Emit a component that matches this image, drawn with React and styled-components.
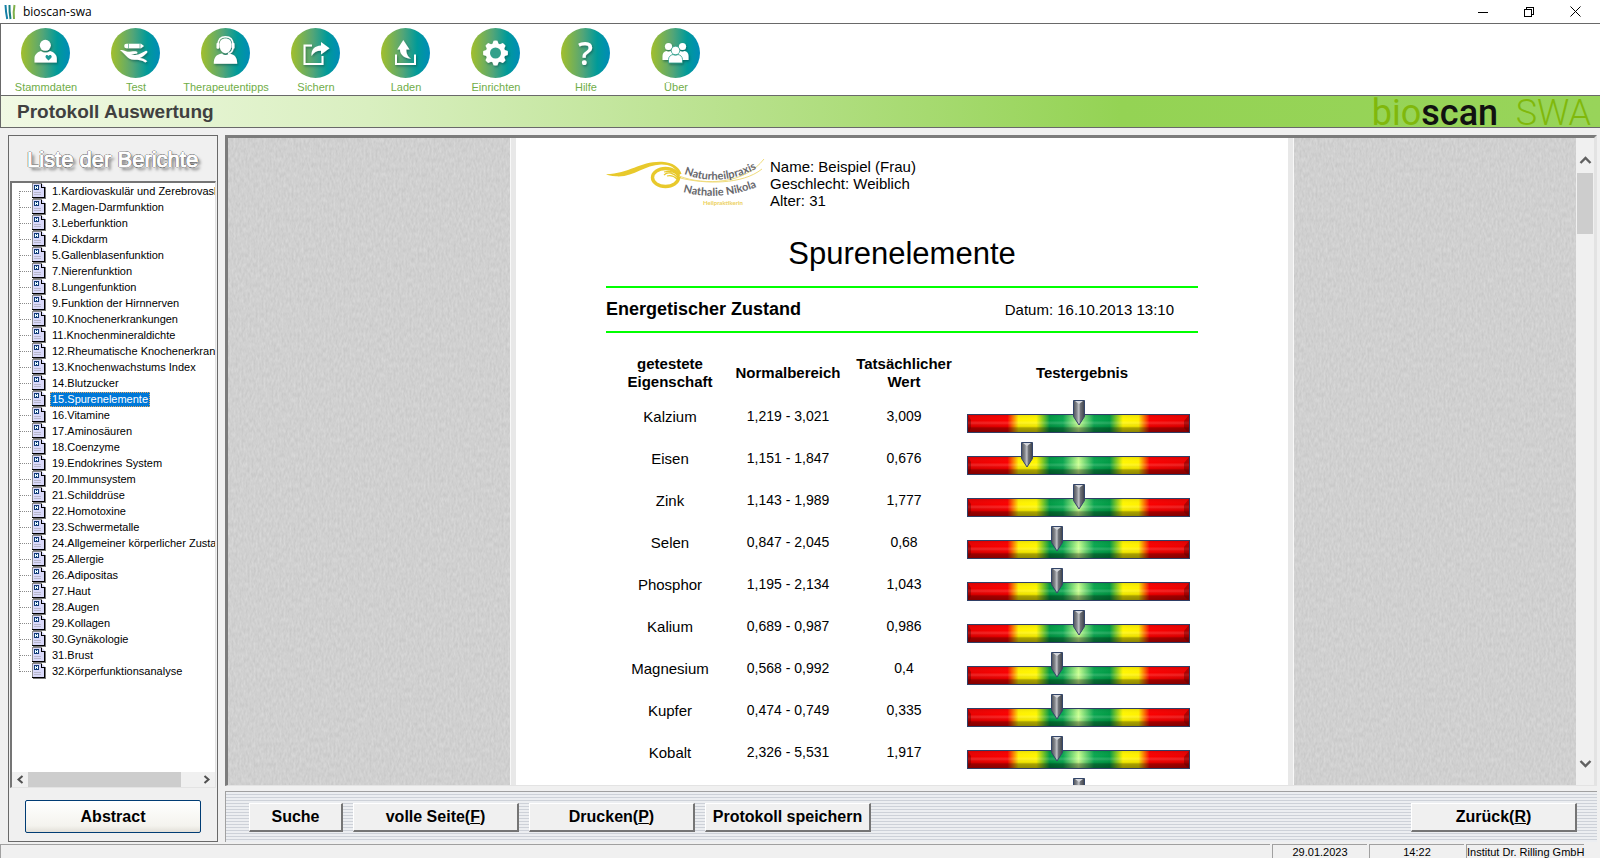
import React from "react";
import styled, { createGlobalStyle, css } from "styled-components";

const GlobalStyle = createGlobalStyle`
  * { box-sizing: border-box; }
  html, body, #root { height: 100%; margin: 0; }
  body {
    background: #f0f0f0;
    color: #000;
    font-family: "Liberation Sans", Arial, sans-serif;
    font-size: 11px;
    overflow: hidden;
  }
  button { font-family: inherit; color: inherit; margin: 0; padding: 0; }
`;

const Window = styled.div`
  display: flex;
  flex-direction: column;
  height: 100vh;
`;

/* ---------- title bar ---------- */

const TitleBar = styled.header`
  display: flex;
  align-items: center;
  height: 23px;
  padding: 0 2px 0 4px;
  background: #fff;
`;

const AppName = styled.span`
  flex: 1;
  padding-left: 7px;
  font: 12px/16px "Open Sans", "Noto Sans", sans-serif;
`;

const WindowButtons = styled.div`
  display: flex;
`;

const WindowButton = styled.button`
  display: grid;
  place-items: center;
  width: 46px;
  height: 20px;
  border: 0;
  background: none;
`;

/* ---------- tool bar ---------- */

const ToolBar = styled.nav`
  display: flex;
  height: 73px;
  border: 1px solid #696969;
  border-right: 0;
  background: #fff;
`;

const ToolButton = styled.button`
  display: flex;
  flex-direction: column;
  align-items: center;
  gap: 3px;
  width: 90px;
  padding-top: 4px;
  border: 0;
  background: none;
  color: #70ad47;
  font-size: 11px;
  line-height: 13px;
  white-space: nowrap;
`;

/* ---------- banner ---------- */

const Banner = styled.div`
  display: flex;
  align-items: center;
  justify-content: space-between;
  height: 32px;
  padding: 0 9px 0 16px;
  border-left: 1px solid #696969;
  border-bottom: 1px solid #696969;
  background: linear-gradient(90deg, #f1f9e4 0%, #d9efc0 23%, #b8e18c 46%, #94d354 70%, #98d45a 100%);
`;

const BannerTitle = styled.h1`
  margin: 0;
  color: #404040;
  font-size: 19px;
  line-height: 28px;
`;

const Brand = styled.div`
  padding-top: 4px;
  color: #80b80c;
  font: 300 36px/31px Roboto, sans-serif;
  white-space: pre;
  b { color: #111; font-weight: 500; }
`;

const BrandPrefix = styled.span`
  font-weight: 400;
`;

/* ---------- main area ---------- */

const Main = styled.main`
  display: flex;
  flex: 1;
  gap: 7px;
  min-height: 0;
  padding: 7px 3px 2px 8px;
`;

const Sidebar = styled.aside`
  display: flex;
  flex-direction: column;
  width: 210px;
  border: 1px solid #696969;
`;

const SidebarTitle = styled.h2`
  margin: 0;
  padding: 11px 0 8px 18px;
  color: #fff;
  font-size: 22px;
  font-weight: 400;
  line-height: 26px;
  white-space: nowrap;
  -webkit-text-stroke: 1px #fff;
  text-shadow:
    1px 0 0 #555, -1px 0 0 #555, 0 1px 0 #555, 0 -1px 0 #555,
    3px 3px 3px #777;
`;

const TreeBox = styled.div`
  display: flex;
  flex: 1;
  flex-direction: column;
  min-height: 0;
  margin: 0 1px;
  border: 1px solid #e3e3e3;
  border-top: 2px solid #757575;
  border-left: 2px solid #757575;
  background: #fff;
`;

const Tree = styled.ul`
  flex: 1;
  margin: 0;
  padding: 0;
  list-style: none;
  overflow: hidden;
`;

const TreeRow = styled.li`
  display: flex;
  align-items: center;
  height: 16px;
  padding-left: 7px;
  svg { flex: none; }
`;

const TreeLabel = styled.button`
  height: 15px;
  margin-left: 4px;
  padding: 0 1px;
  border: 1px dotted transparent;
  background: none;
  font-size: 11px;
  line-height: 13px;
  white-space: nowrap;
  ${(p) => p.$selected && css`
    border-color: #e8a860;
    background: #0078d7;
    color: #fff;
  `}
`;

const HScroll = styled.div`
  display: grid;
  grid-template-columns: 16px 1fr 17px;
  height: 15px;
  background: #f0f0f0;
`;

const VScroll = styled.div`
  display: flex;
  flex-direction: column;
  align-items: stretch;
  justify-content: space-between;
  width: 18px;
  padding: 15px 1px 14px;
  background: #f0f0f0;
`;

const ScrollArrow = styled.button`
  display: grid;
  place-items: center;
  min-height: 15px;
  border: 0;
  background: none;
`;

const HThumb = styled.div`
  width: 90%;
  background: #cdcdcd;
`;

const VTrack = styled.div`
  flex: 1;
  padding-top: 5px;
`;

const VThumb = styled.div`
  height: 61px;
  background: #cdcdcd;
`;

const SidebarFooter = styled.div`
  padding: 12px 16px 8px;
`;

const AbstractButton = styled.button`
  width: 100%;
  height: 33px;
  border: 1px solid #003c74;
  border-radius: 2px;
  background: linear-gradient(#fff, #f4f3ee 80%, #e2dfd8);
  font-size: 16px;
  font-weight: 700;
`;

const Content = styled.section`
  display: flex;
  flex: 1;
  flex-direction: column;
  gap: 5px;
  min-width: 0;
`;

const Viewer = styled.div`
  display: flex;
  flex: 1;
  min-height: 0;
  border: 1px solid #e3e3e3;
  border-right-width: 3px;
  border-top: 3px solid #7c7c7c;
  border-left: 3px solid #7c7c7c;
`;

const Desk = styled.div`
  position: relative;
  display: flex;
  flex: 1;
  justify-content: center;
  background: #cfcfcf;
  overflow: hidden;
`;

const Grain = styled.svg`
  position: absolute;
  inset: 0;
  width: 100%;
  height: 100%;
`;

const Paper = styled.article`
  position: relative;
  width: 782px;
  min-height: 1000px;
  padding: 20px 90px 0;
  border: solid #e8e8e8;
  border-width: 0 5px;
  outline: 1px solid #f8f8f8;
  background: #fff;
  font-size: 15px;
`;

const PatientHeader = styled.div`
  display: flex;
  gap: 4px;
`;

const PatientInfo = styled.div`
  font-size: 15px;
  line-height: 17px;
`;

const ReportTitle = styled.h2`
  margin: 27px 0 14px;
  font-size: 31px;
  font-weight: 400;
  line-height: 36px;
  text-align: center;
`;

const StateLine = styled.div`
  display: flex;
  align-items: center;
  justify-content: space-between;
  height: 47px;
  padding-right: 24px;
  border: solid #0f0;
  border-width: 2px 0;
  h3 { margin: 0; font-size: 18px; }
`;

const ResultTable = styled.table`
  width: 100%;
  margin-top: 18px;
  border-collapse: collapse;
  table-layout: fixed;
  text-align: center;
  th { height: 44px; padding: 0; line-height: 18px; }
  td { height: 42px; padding: 0; }
  svg { display: block; }
`;

const NumberCell = styled.td`
  font-size: 14px;
`;

const GaugeCell = styled.td`
  && { padding-left: 1px; }
`;

const Column = styled.col`
  width: ${(p) => p.$width};
`;

const ActionBar = styled.footer`
  display: flex;
  align-items: flex-start;
  gap: 10px;
  height: 51px;
  padding: 11px 20px 0 23px;
  border-top: 1px solid #a0a0a0;
  border-left: 1px solid #a0a0a0;
  background: repeating-linear-gradient(#eceef1 0 2px, #cdd1d8 2px 3px);
`;

const ActionButton = styled.button`
  width: ${(p) => (p.$narrow ? "94px" : "166px")};
  height: 29px;
  border: solid;
  border-width: 1px 2px 2px 1px;
  border-color: #fff #757575 #757575 #fff;
  background: #f0f0f0;
  font-size: 16px;
  font-weight: 700;
  white-space: nowrap;
  ${(p) => p.$end && css`margin-left: auto;`}
`;

/* ---------- status bar ---------- */

const StatusBar = styled.footer`
  display: grid;
  grid-template-columns: 1fr 95px 95px 118px;
  gap: 2px;
  height: 14px;
  padding-right: 16px;
  line-height: 15px;
  text-align: center;
  white-space: nowrap;
`;

const StatusCell = styled.div`
  height: 14px;
  border: solid #a0a0a0;
  border-width: 1px 0 0 1px;
`;

/* ---------- drawings ---------- */

const gearPoints = Array.from({ length: 40 }, (_, i) => {
  const r = i % 5 < 3 ? 12.4 : 9.8;
  const a = (i * 9 - 9) * (Math.PI / 180);
  return `${(24.5 + r * Math.cos(a)).toFixed(2)},${(25 + r * Math.sin(a)).toFixed(2)}`;
}).join(" ");

const GLYPHS = {
  person: (
    <>
      <circle cx="24.3" cy="17.3" r="5.5" />
      <path d="M13.500 34.500v-4c0-4 3-6.500 6.500-7.500 2.500 2 6.500 2 9 0 3.700 1 6.800 3.500 6.800 7.500v4z" />
      <path fill="#1a9a96" d="M27.500 32.500c-2-1.600-3-2.600-3-3.900 0-2 2.300-2.200 3-.6.700-1.600 3.200-1.400 3.200.6 0 1.300-1.200 2.300-3.200 3.900z" />
    </>
  ),
  hand: (
    <>
      <path d="M15.500 15.700h14.500l3 2.300-3 2.300H15.500a2.300 2.300 0 0 1 0-4.600z" />
      <path stroke="#4aa583" strokeWidth=".7" d="M17.500 15.700v4.600M29 15.700v4.600" />
      <path d="M9 22.200c3-.8 5 1.300 7.500 1.500 3 .1 7-.9 9-.2 1.500.6 1.200 2-.5 2.300l-5 .8c2.500.8 6 .5 8.500-.7l6-3c1.700-.6 2.600.9 1.300 2-1.800 1.700-4 4-7 5.100 2 .5 5 .6 7.500 3.300l-2 1.300c-3-2.500-7-2.800-11-2.800C16 31.800 14 25 9 22.200z" />
    </>
  ),
  headset: (
    <>
      <path d="M18.500 16.500c0-4 2.500-6 6-6s6 2 6 6c0 5-2.500 8.700-6 8.700s-6-3.700-6-8.700z" />
      <path fill="none" stroke="#fff" strokeWidth="1.500" d="M17 17c0-5.500 3-8.200 7.500-8.200S32 11.500 32 17M32 19c0 4-2 6-5 6.500" />
      <rect x="15.500" y="14.800" width="2.800" height="6" rx="1.200" />
      <rect x="30.700" y="14.800" width="2.800" height="6" rx="1.200" />
      <path d="M12.800 35.800c0-6 2-9.300 8.200-10.300 2 2 5 2 7 0 6.200 1 8.200 4.300 8.200 10.300z" />
    </>
  ),
  share: (
    <>
      <path fill="none" stroke="#fff" strokeWidth="2" d="M21 17.500h-7.500V36h18v-8" />
      <path d="M20.500 28c-.5-6 3-10.300 9.500-10.500V14l8.500 6.300-8.500 6.200v-3.700c-4-.3-7 1.400-9.500 5.200z" />
    </>
  ),
  load: (
    <>
      <path fill="none" stroke="#fff" strokeWidth="2" d="M15 26.500V36h19v-9.500" />
      <path d="M22.300 12l6.200 9.500h-3.200c-.1 4 1.200 7 5 9.300-6-.5-11.500-3.500-11.300-9.300h-2.800z" />
    </>
  ),
  gear: (
    <>
      <polygon points={gearPoints} />
      <circle cx="24.500" cy="25" r="5.500" fill="#31a08a" />
    </>
  ),
  help: (
    <text x="24.500" y="36.500" textAnchor="middle" fontFamily="Open Sans" fontWeight="600" fontSize="33">?</text>
  ),
  group: (
    <>
      <circle cx="17.500" cy="18.500" r="3.600" />
      <circle cx="31.500" cy="18.500" r="3.600" />
      <path d="M11.500 32v-4c0-3 1.800-4.700 4-5 1.500 1 2.700 1 4 0l3 1.500L19 32zM37.500 32v-4c0-3-1.800-4.700-4-5-1.500 1-2.700 1-4 0l-3 1.500L30 32z" />
      <circle cx="24.500" cy="22.500" r="4.300" stroke="#2b9f8c" strokeWidth=".8" />
      <path stroke="#2b9f8c" strokeWidth=".8" d="M17.500 35v-3.500c0-2.700 2-4.500 4.500-5 1.500 1 3.500 1 5 0 2.500.5 4.500 2.300 4.500 5V35z" />
    </>
  ),
};

function ToolIcon({ kind }) {
  return (
    <svg width="50" height="50" viewBox="0 0 50 50" aria-hidden="true">
      <defs>
        <linearGradient id={`disc-${kind}`}>
          <stop offset="0" stopColor="#a3bf2b" />
          <stop offset="0.45" stopColor="#52a578" />
          <stop offset="0.74" stopColor="#009a99" />
          <stop offset="1" stopColor="#008bb8" />
        </linearGradient>
        <filter id={`shade-${kind}`} x="-20%" y="-20%" width="150%" height="150%">
          <feDropShadow dx="1" dy="1.500" stdDeviation="1" floodColor="#064a4a" floodOpacity="0.55" />
        </filter>
      </defs>
      <ellipse cx="24.500" cy="25" rx="24.500" ry="25" fill={`url(#disc-${kind})`} />
      <g fill="#fff" filter={`url(#shade-${kind})`}>{GLYPHS[kind]}</g>
    </svg>
  );
}

const AppMark = () => (
  <svg width="12" height="16" viewBox="0 0 12 16" aria-hidden="true">
    <g fill="none" strokeWidth="2">
      <path stroke="#1480a8" d="M1.500 1c.2 5 .7 9 1.700 14" />
      <path stroke="#177d80" d="M5.500 1c-.2 5 .2 9 1 14" />
      <path stroke="#7fb04a" d="M10.500 1c-1 5-1 9-.5 14" />
    </g>
  </svg>
);

const ReportIcon = () => (
  <svg width="14" height="16" viewBox="0 0 14 16" shapeRendering="crispEdges" aria-hidden="true">
    <path fill="#777" d="M1 15h13v1H1zM13 4h1v12h-1z" />
    <path fill="#d9d9fa" d="M0 1h10l3 3v10H0z" />
    <path fill="#888" d="M0 0h10v1H0zM0 1h1v13H0z" />
    <path fill="#000" d="M0 14h13v1H0zM12 4h1v11h-1zM9 1h1v3h3v1H9z" />
    <path fill="#123a78" d="M2 2h5v5H2z" />
    <path fill="#e8ffff" d="M3 3h1v3H3zM5 3h1v3H5zM4 4h1v1H4z" />
    <path fill="#b8b8cc" d="M2 9h7v1H2zM2 11h7v1H2z" />
  </svg>
);

const TreeBranch = ({ first, last }) => (
  <svg width="13" height="16" viewBox="0 0 13 16" shapeRendering="crispEdges" aria-hidden="true">
    <path
      fill="none"
      stroke="#8a8a8a"
      strokeDasharray="1 1"
      d={`M.5 ${first ? 8 : 0}V${last ? 9 : 16}M1 8.500h11`}
    />
  </svg>
);

const Chevron = ({ turn = 0 }) => (
  <svg width="13" height="13" viewBox="0 0 13 13" aria-hidden="true">
    <path fill="none" stroke="#606060" strokeWidth="2.400" d="M1.500 9l5-5 5 5" transform={`rotate(${turn} 6.500 6.500)`} />
  </svg>
);

const SmallChevron = ({ turn = 0 }) => (
  <svg width="9" height="9" viewBox="0 0 9 9" aria-hidden="true">
    <path fill="none" stroke="#505050" strokeWidth="2" d="M6.500 1l-4 3.500 4 3.500" transform={`rotate(${turn} 4.500 4.500)`} />
  </svg>
);

const PracticeLogo = () => (
  <svg width="160" height="50" viewBox="0 0 160 50" role="img" aria-label="Naturheilpraxis Nathalie Nikola">
    <defs>
      <path id="curve-top" d="M78 16Q117 31 157 7" />
      <path id="curve-mid" d="M77 34Q117 45 160 25" />
    </defs>
    <path fill="#e8c92c" d="M0 16.300c24-1 35-13.500 56-12.600 11 .5 17 5.300 19.500 12l-2.500 1C69 9 63 6.300 55 6.500 38 7 28 19.500 10 18.300 5 18 2 17.500 0 16.300z" />
    <ellipse cx="59.500" cy="19.500" rx="13" ry="9" fill="none" stroke="#e8c92c" strokeWidth="3.400" />
    <path fill="none" stroke="#e8c92c" strokeWidth="1.200" d="M58 14c7-2 13 1 17 6M58 17c4-4 10-2 14 3M61 18c3-1 7 0 10 3" />
    <path fill="none" stroke="#f0dc7c" strokeWidth="1" d="M73 18c26 10 66 8 85-17M74 20c25 6 62 7 82-9" />
    <g fill="#68686c" fontFamily="Lato" fontWeight="700" fontSize="11">
      <text><textPath href="#curve-top">Naturheilpraxis</textPath></text>
      <text><textPath href="#curve-mid">Nathalie Nikola</textPath></text>
    </g>
    <text x="97" y="47" fill="#ecd05a" fontFamily="Lato" fontWeight="700" fontSize="6">Heilpraktikerin</text>
  </svg>
);

const GaugeDefs = () => (
  <svg width="0" height="0" aria-hidden="true">
    <defs>
      <linearGradient id="zones">
        <stop offset="0" stopColor="#e80000" />
        <stop offset="0.18" stopColor="#fa0000" />
        <stop offset="0.23" stopColor="#fff000" />
        <stop offset="0.31" stopColor="#fff600" />
        <stop offset="0.37" stopColor="#009a45" />
        <stop offset="0.43" stopColor="#0aa650" />
        <stop offset="0.50" stopColor="#c8ff90" />
        <stop offset="0.57" stopColor="#0aa650" />
        <stop offset="0.64" stopColor="#009a45" />
        <stop offset="0.70" stopColor="#fff600" />
        <stop offset="0.77" stopColor="#fff000" />
        <stop offset="0.82" stopColor="#fa0000" />
        <stop offset="1" stopColor="#e80000" />
      </linearGradient>
      <linearGradient id="bevel" x2="0" y2="1">
        <stop offset="0" stopColor="#000" stopOpacity="0.08" />
        <stop offset="0.3" stopColor="#fff" stopOpacity="0" />
        <stop offset="0.45" stopColor="#fff" stopOpacity="0.16" />
        <stop offset="0.62" stopColor="#000" stopOpacity="0.04" />
        <stop offset="0.72" stopColor="#000" stopOpacity="0.34" />
        <stop offset="1" stopColor="#000" stopOpacity="0.46" />
      </linearGradient>
      <linearGradient id="needle">
        <stop offset="0" stopColor="#4c5058" />
        <stop offset="0.3" stopColor="#85888e" />
        <stop offset="0.5" stopColor="#c4c6ca" />
        <stop offset="0.6" stopColor="#74777d" />
        <stop offset="1" stopColor="#3c4048" />
      </linearGradient>
    </defs>
  </svg>
);

const Gauge = ({ value, name }) => (
  <svg width="223" height="36" viewBox="0 -2 223 36" role="img" aria-label={name}>
    <rect x=".5" y="15" width="222" height="18" fill="url(#zones)" />
    <rect x=".5" y="15" width="222" height="18" fill="url(#bevel)" />
    <path fill="#500" fillOpacity=".4" d="M1 15l3 5v8l-3 5zM222 15l-5 6v7l5 5z" />
    <rect x=".5" y="14.500" width="222" height="18" fill="none" stroke="#2f3f66" />
    <g transform={`translate(${value} 0)`}>
      <path fill="url(#needle)" stroke="#34466a" d="M-5.500 .5h11v16L0 25l-5.500-8.500z" />
      <path fill="#d5d7dc" d="M-4 1h8L0 4z" />
    </g>
  </svg>
);

/* ---------- data ---------- */

const TOOLS = [
  ["person", "Stammdaten"],
  ["hand", "Test"],
  ["headset", "Therapeutentipps"],
  ["share", "Sichern"],
  ["load", "Laden"],
  ["gear", "Einrichten"],
  ["help", "Hilfe"],
  ["group", "Über"],
];

const REPORTS = [
  "1.Kardiovaskulär und Zerebrovaskulär",
  "2.Magen-Darmfunktion",
  "3.Leberfunktion",
  "4.Dickdarm",
  "5.Gallenblasenfunktion",
  "7.Nierenfunktion",
  "8.Lungenfunktion",
  "9.Funktion der Hirnnerven",
  "10.Knochenerkrankungen",
  "11.Knochenmineraldichte",
  "12.Rheumatische Knochenerkrankung",
  "13.Knochenwachstums Index",
  "14.Blutzucker",
  "15.Spurenelemente",
  "16.Vitamine",
  "17.Aminosäuren",
  "18.Coenzyme",
  "19.Endokrines System",
  "20.Immunsystem",
  "21.Schilddrüse",
  "22.Homotoxine",
  "23.Schwermetalle",
  "24.Allgemeiner körperlicher Zustand",
  "25.Allergie",
  "26.Adipositas",
  "27.Haut",
  "28.Augen",
  "29.Kollagen",
  "30.Gynäkologie",
  "31.Brust",
  "32.Körperfunktionsanalyse",
];

const RESULTS = [
  ["Kalzium", "1,219 - 3,021", "3,009", 112],
  ["Eisen", "1,151 - 1,847", "0,676", 60],
  ["Zink", "1,143 - 1,989", "1,777", 112],
  ["Selen", "0,847 - 2,045", "0,68", 90],
  ["Phosphor", "1,195 - 2,134", "1,043", 90],
  ["Kalium", "0,689 - 0,987", "0,986", 112],
  ["Magnesium", "0,568 - 0,992", "0,4", 90],
  ["Kupfer", "0,474 - 0,749", "0,335", 90],
  ["Kobalt", "2,326 - 5,531", "1,917", 90],
  ["", "", "", 112],
];

export default function App() {
  const [selected, setSelected] = React.useState("15.Spurenelemente");

  return (
    <Window>
      <GlobalStyle />
      <TitleBar>
        <AppMark />
        <AppName>bioscan-swa</AppName>
        <WindowButtons>
          <WindowButton aria-label="Minimieren">
            <svg width="10" height="10" shapeRendering="crispEdges"><path stroke="#000" d="M0 5.500h10" /></svg>
          </WindowButton>
          <WindowButton aria-label="Wiederherstellen">
            <svg width="10" height="10" shapeRendering="crispEdges">
              <path fill="none" stroke="#000" d="M.5 2.500h7v7h-7zM2.500 2V.5h7v7H8" />
            </svg>
          </WindowButton>
          <WindowButton aria-label="Schließen">
            <svg width="11" height="11"><path stroke="#000" d="M.5 .5l10 10M10.500 .5l-10 10" /></svg>
          </WindowButton>
        </WindowButtons>
      </TitleBar>

      <ToolBar>
        {TOOLS.map(([kind, label]) => (
          <ToolButton key={kind}>
            <ToolIcon kind={kind} />
            {label}
          </ToolButton>
        ))}
      </ToolBar>

      <Banner>
        <BannerTitle>Protokoll Auswertung</BannerTitle>
        <Brand><BrandPrefix>bio</BrandPrefix><b>scan</b>{"  "}SWA</Brand>
      </Banner>

      <Main>
        <Sidebar>
          <SidebarTitle>Liste der Berichte</SidebarTitle>
          <TreeBox>
            <Tree>
              {REPORTS.map((name, i) => (
                <TreeRow key={name}>
                  <TreeBranch first={i === 0} last={i === REPORTS.length - 1} />
                  <ReportIcon />
                  <TreeLabel $selected={name === selected} onClick={() => setSelected(name)}>
                    {name}
                  </TreeLabel>
                </TreeRow>
              ))}
            </Tree>
            <HScroll>
              <ScrollArrow aria-label="Nach links"><SmallChevron /></ScrollArrow>
              <HThumb />
              <ScrollArrow aria-label="Nach rechts"><SmallChevron turn={180} /></ScrollArrow>
            </HScroll>
          </TreeBox>
          <SidebarFooter>
            <AbstractButton>Abstract</AbstractButton>
          </SidebarFooter>
        </Sidebar>

        <Content>
          <Viewer>
            <Desk>
              <Grain aria-hidden="true">
                <filter id="grain" x="0" y="0" width="100%" height="100%" colorInterpolationFilters="sRGB">
                  <feTurbulence type="fractalNoise" baseFrequency="0.5 0.2" numOctaves="2" seed="4" />
                  <feColorMatrix values="0.1 0 0 0 0.765  0.1 0 0 0 0.765  0.1 0 0 0 0.765  0 0 0 0 1" />
                </filter>
                <rect width="100%" height="100%" filter="url(#grain)" />
              </Grain>
              <Paper>
                <PatientHeader>
                  <PracticeLogo />
                  <PatientInfo>
                    <div>Name: Beispiel (Frau)</div>
                    <div>Geschlecht: Weiblich</div>
                    <div>Alter: 31</div>
                  </PatientInfo>
                </PatientHeader>
                <ReportTitle>Spurenelemente</ReportTitle>
                <StateLine>
                  <h3>Energetischer Zustand</h3>
                  <span>Datum: 16.10.2013 13:10</span>
                </StateLine>
                <ResultTable>
                  <colgroup>
                    <Column $width="128px" />
                    <Column $width="108px" />
                    <Column $width="124px" />
                    <Column $width="auto" />
                  </colgroup>
                  <thead>
                    <tr>
                      <th scope="col">getestete<br />Eigenschaft</th>
                      <th scope="col">Normalbereich</th>
                      <th scope="col">Tatsächlicher<br />Wert</th>
                      <th scope="col">Testergebnis</th>
                    </tr>
                  </thead>
                  <tbody>
                    {RESULTS.map(([name, range, actual, pos], i) => (
                      <tr key={i}>
                        <td>{name}</td>
                        <NumberCell>{range}</NumberCell>
                        <NumberCell>{actual}</NumberCell>
                        <GaugeCell><Gauge value={pos} name={name} /></GaugeCell>
                      </tr>
                    ))}
                  </tbody>
                </ResultTable>
                <GaugeDefs />
              </Paper>
            </Desk>
            <VScroll>
              <ScrollArrow aria-label="Nach oben"><Chevron /></ScrollArrow>
              <VTrack><VThumb /></VTrack>
              <ScrollArrow aria-label="Nach unten"><Chevron turn={180} /></ScrollArrow>
            </VScroll>
          </Viewer>
          <ActionBar>
            <ActionButton $narrow>Suche</ActionButton>
            <ActionButton>volle Seite(<u>F</u>)</ActionButton>
            <ActionButton>Drucken(<u>P</u>)</ActionButton>
            <ActionButton>Protokoll speichern</ActionButton>
            <ActionButton $end>Zurück(<u>R</u>)</ActionButton>
          </ActionBar>
        </Content>
      </Main>

      <StatusBar>
        <StatusCell />
        <StatusCell>29.01.2023</StatusCell>
        <StatusCell>14:22</StatusCell>
        <StatusCell>Institut Dr. Rilling GmbH</StatusCell>
      </StatusBar>
    </Window>
  );
}
